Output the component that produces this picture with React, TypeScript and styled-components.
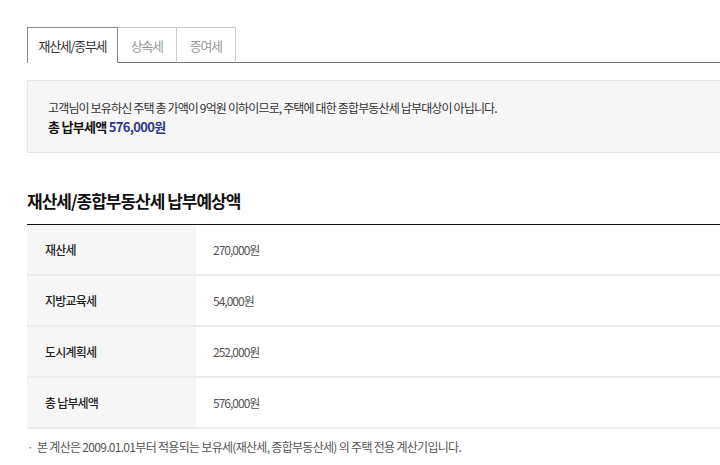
import styled, { createGlobalStyle } from 'styled-components'

const GlobalStyle = createGlobalStyle`
  html, body {
    margin: 0;
    padding: 0;
    background: #fff;
    overflow: hidden;
  }
  body {
    font-family: "Noto Sans CJK KR", "Noto Sans", sans-serif;
    color: #333;
  }
`

const rows = [
  { label: '재산세', value: '270,000원' },
  { label: '지방교육세', value: '54,000원' },
  { label: '도시계획세', value: '252,000원' },
  { label: '총 납부세액', value: '576,000원' },
]

const tabs = ['재산세/종부세', '상속세', '증여세']

export default function App() {
  return (
    <>
      <GlobalStyle />
      <Page>
        <TabBar>
          {tabs.map((t, i) => (
            <Tab key={t} active={i === 0}>
              {t}
            </Tab>
          ))}
          <TabFill />
        </TabBar>

        <InfoBox>
          <InfoText>고객님이 보유하신 주택 총 가액이 9억원 이하이므로, 주택에 대한 종합부동산세 납부대상이 아닙니다.</InfoText>
          <TotalLine>
            총 납부세액 <TotalValue>576,000원</TotalValue>
          </TotalLine>
        </InfoBox>

        <SectionTitle>재산세/종합부동산세 납부예상액</SectionTitle>

        <Table>
          {rows.map((r) => (
            <Row key={r.label}>
              <LabelCell>{r.label}</LabelCell>
              <ValueCell>{r.value}</ValueCell>
            </Row>
          ))}
        </Table>

        <Note>본 계산은 2009.01.01부터 적용되는 보유세(재산세, 종합부동산세) 의 주택 전용 계산기입니다.</Note>
      </Page>
    </>
  )
}

const Page = styled.div`
  padding: 27px 0 0 27px;
`

const TabBar = styled.div`
  display: flex;
  align-items: stretch;
  height: 36px;
`

const Tab = styled.div<{ active: boolean }>`
  display: flex;
  align-items: center;
  justify-content: center;
  padding: 0 ${({ active }) => (active ? '10.5px' : '13px')};
  font-size: 13px;
  letter-spacing: -1.3px;
  color: ${({ active }) => (active ? '#333' : '#999')};
  border: 1px solid ${({ active }) => (active ? '#888' : '#ccc')};
  border-bottom: ${({ active }) => (active ? 'none' : '1px solid #777')};
  border-left: ${({ active }) => (active ? '1px solid #888' : 'none')};
  box-sizing: border-box;
  background: #fff;
`

const TabFill = styled.div`
  flex: 1;
  border-bottom: 1px solid #777;
`

const InfoBox = styled.div`
  margin-top: 17px;
  background: #f6f6f6;
  border: 1px solid #e6e6e6;
  border-right: none;
  padding: 18px 20px 17px 20px;
  height: 73px;
  box-sizing: border-box;
`

const InfoText = styled.p`
  margin: 0;
  font-size: 12px;
  letter-spacing: -0.85px;
  line-height: 18px;
  color: #333;
`

const TotalLine = styled.p`
  margin: 1px 0 0;
  font-size: 13px;
  font-weight: bold;
  letter-spacing: -0.7px;
  line-height: 18px;
  color: #111;
`

const TotalValue = styled.span`
  color: #2c3889;
`

const SectionTitle = styled.h2`
  margin: 36px 0 0;
  font-size: 17px;
  font-weight: bold;
  letter-spacing: -1px;
  line-height: 24px;
  color: #111;
`

const Table = styled.div`
  margin-top: 11px;
  border-top: 1px solid #111;
`

const Row = styled.div`
  display: grid;
  grid-template-columns: 169px 1fr;
  height: 51px;
  border-bottom: 2px solid #ececec;
  box-sizing: border-box;
`

const LabelCell = styled.div`
  display: flex;
  align-items: center;
  padding-left: 18px;
  background: #f6f6f6;
  font-size: 12px;
  font-weight: 500;
  letter-spacing: -0.8px;
  color: #222;
`

const ValueCell = styled.div`
  display: flex;
  align-items: center;
  padding-left: 17px;
  font-size: 12px;
  letter-spacing: -1px;
  color: #555;
`

const Note = styled.p`
  position: relative;
  margin: 9px 0 0;
  padding-left: 10px;
  font-size: 12px;
  letter-spacing: -0.7px;
  line-height: 18px;
  color: #555;

  &::before {
    content: '·';
    position: absolute;
    left: 0;
    top: 0;
    color: #777;
  }
`
